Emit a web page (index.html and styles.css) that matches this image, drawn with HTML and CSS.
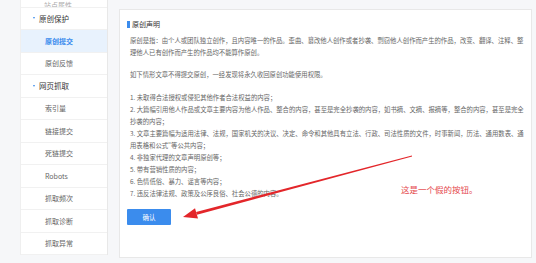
FILE: index.html
```html
<!DOCTYPE html>
<html lang="zh-CN">
<head>
<meta charset="utf-8">
<title>原创声明</title>
<link rel="stylesheet" href="styles.css">
</head>
<body>
<div class="page">
  <nav class="side">
    <div class="item cut"><span>站点属性</span></div>
    <div class="item head"><i class="tri"></i>原创保护</div>
    <div class="item sub active">原创提交</div>
    <div class="item sub">原创反馈</div>
    <div class="item head"><i class="tri"></i>网页抓取</div>
    <div class="item sub">索引量</div>
    <div class="item sub">链接提交</div>
    <div class="item sub">死链提交</div>
    <div class="item sub">Robots</div>
    <div class="item sub">抓取频次</div>
    <div class="item sub">抓取诊断</div>
    <div class="item sub">抓取异常</div>
  </nav>
  <main class="panel">
    <h2 class="title">原创声明</h2>
    <div class="body">
      <p class="intro">原创是指：由个人或团队独立创作，且内容唯一的作品。歪曲、篡改他人创作或者抄袭、剽窃他人创作而产生的作品，改变、翻译、注释、整<br>理他人已有创作而产生的作品均不能算作原创。</p>
      <p class="warn">如下情形文章不得提交原创，一经发现将永久收回原创功能使用权限。</p>
      <ul class="rules">
        <li>1. 未取得合法授权或侵犯其他作者合法权益的内容；</li>
        <li>2. 大篇幅引用他人作品或文章主要内容为他人作品、整合的内容，甚至是完全抄袭的内容，如书摘、文摘、报摘等，整合的内容，甚至是完全<br>抄袭的内容；</li>
        <li>3. 文章主要篇幅为适用法律、法规，国家机关的决议、决定、命令和其他具有立法、行政、司法性质的文件，时事新闻，历法、通用数表、通<br>用表格和公式"等公共内容；</li>
        <li>4. 非独家代理的文章声明原创等；</li>
        <li>5. 带有营销性质的内容；</li>
        <li>6. 色情低俗、暴力、谣言等内容；</li>
        <li>7. 违反法律法规、政策及公序良俗、社会公德的内容。</li>
      </ul>
    </div>
    <button class="btn" type="button">确认</button>
  </main>
</div>
<svg class="mark" width="536" height="263" viewBox="0 0 536 263" aria-hidden="true">
  <polygon points="411.9,155.6 412.1,156.4 196.9,214.8 196.1,212.0" fill="#e3262a"/>
  <polygon points="183,217 195.0,208.2 198.0,218.6" fill="#e3262a"/>
</svg>
<div class="note">这是一个假的按钮。</div>
</body>
</html>
```

FILE: styles.css
```css
html, body {
  margin: 0;
  padding: 0;
}
body {
  width: 536px;
  height: 263px;
  overflow: hidden;
  position: relative;
  background: #f6f7f9;
  font-family: "Noto Sans CJK SC", "Noto Sans", sans-serif;
}
.page {
  display: flex;
  align-items: flex-start;
  padding-left: 20px;
  gap: 11px;
}
.side {
  width: 88px;
  box-sizing: border-box;
  background: #fff;
  border-left: 1px solid #efefef;
  border-right: 1px solid #e8e8e8;
  display: flex;
  flex-direction: column;
}
.item {
  height: 22.5px;
  box-sizing: border-box;
  display: flex;
  align-items: center;
  border-bottom: 1px solid #f1f1f1;
  white-space: nowrap;
}
.cut {
  height: 7.5px;
  overflow: hidden;
  align-items: flex-end;
  padding-left: 23px;
  font-size: 7px;
  color: #aaa;
}
.cut span {
  line-height: 3px;
}
.head {
  padding-left: 12px;
  gap: 4px;
  font-size: 7.5px;
  color: #333;
}
.tri {
  width: 0;
  height: 0;
  border-left: 1.5px solid transparent;
  border-right: 1.5px solid transparent;
  border-top: 2.5px solid #3b8ced;
}
.sub {
  padding-left: 24px;
  font-size: 7px;
  color: #666;
}
.active {
  background: #e8f2fd;
  color: #3b8ced;
  font-weight: bold;
}
.panel {
  width: 413px;
  height: 249px;
  margin-top: 9px;
  box-sizing: border-box;
  background: #fff;
  border: 1px solid #e8e8e8;
  padding: 9px 0 0 7px;
  overflow: hidden;
}
.title {
  margin: 0;
  display: flex;
  align-items: center;
  gap: 2px;
  font-size: 7px;
  font-weight: normal;
  color: #333;
  line-height: 10px;
}
.title::before {
  content: "";
  width: 3px;
  height: 7px;
  background: #3b8ced;
}
.body {
  padding-left: 3px;
  font-size: 6.35px;
  line-height: 12px;
  color: #666;
  white-space: nowrap;
}
.body p {
  margin: 0;
}
.intro {
  padding-top: 6px;
}
.warn {
  padding-top: 10px;
}
.rules {
  list-style: none;
  margin: 11px 0 0;
  padding: 0;
}
.btn {
  display: block;
  margin-top: 9px;
  width: 44px;
  height: 16px;
  padding: 0;
  border: 0;
  border-radius: 1px;
  background: #3b8ced;
  color: #fff;
  font-family: inherit;
  font-size: 6.5px;
}
.mark {
  position: absolute;
  left: 0;
  top: 0;
  pointer-events: none;
}
.note {
  position: absolute;
  left: 401px;
  top: 183px;
  font-size: 8.5px;
  line-height: 12px;
  color: #e5484d;
  white-space: nowrap;
}
```
